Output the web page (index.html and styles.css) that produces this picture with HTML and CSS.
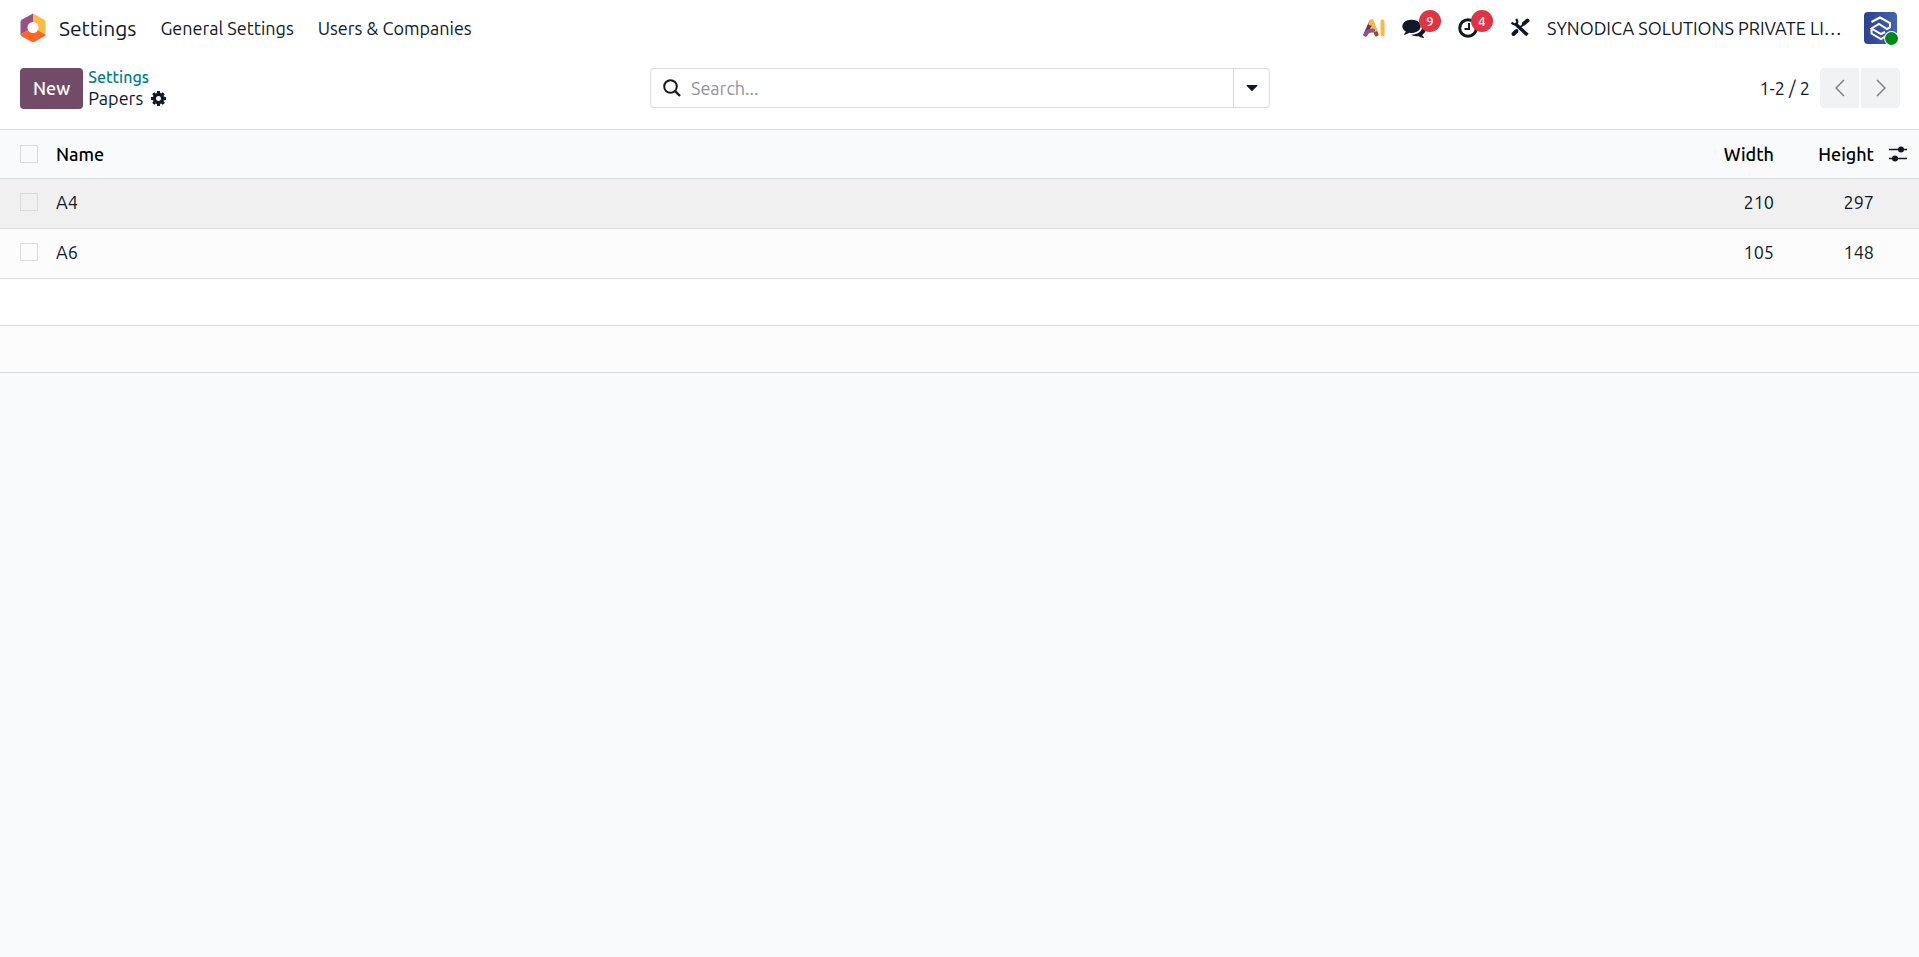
FILE: index.html
```html
<!DOCTYPE html>
<html lang="en">
  <head>
    <title>Papers</title>
    <meta charset="utf-8">
    <meta name="viewport" content="width=device-width, initial-scale=1">
    <link rel="stylesheet" href="styles.css">
  </head>
  <body>
    <header class="navbar">
      <nav class="menu">
        <a href="#" class="brand">
          <svg class="logo" viewBox="0 0 26 30" aria-hidden="true">
            <path d="M13 .5 2 6.500Q.5 7.500.5 9v12.500L13 14.500z" fill="#985184"/>
            <path d="M13 .5 24 6.500q1.500 1 1.500 2.500v12.500L13 14.500z" fill="#fbb945"/>
            <path d="M.5 21.500 13 14.500l12.500 7q0 1-1.500 2l-9.500 5.200q-1.500.8-3 0L2 23.500q-1.500-1-1.500-2z" fill="#fc6626"/>
            <circle cx="13" cy="14.500" r="5.500" fill="#fff"/>
          </svg>
          <span>Settings</span>
        </a>
        <a href="#" class="menu-item">General Settings</a>
        <a href="#" class="menu-item">Users &amp; Companies</a>
      </nav>
      <div class="systray">
        <button type="button" class="tray-btn" aria-label="AI">
          <svg class="icon-ai" viewBox="0 0 22 18" aria-hidden="true">
            <path d="M8.500 2.500 13.500 15.500" stroke="#a5432c" stroke-width="4" stroke-linecap="round"/>
            <path d="M8.500 2.500 12 11" stroke="#fbb945" stroke-width="4" stroke-linecap="round"/>
            <path d="M8 3 2.500 15.500" stroke="#6d2b5c" stroke-width="4" stroke-linecap="round"/>
            <path d="M8.500 2.500 7.500 4.500" stroke="#fbb945" stroke-width="4" stroke-linecap="round"/>
            <path d="M2.500 15.500q2-4.500 7.500-4" stroke="#985184" stroke-width="4" stroke-linecap="round" fill="none"/>
            <path d="M19.500 2.500v13" stroke="#fbb945" stroke-width="4" stroke-linecap="round"/>
          </svg>
        </button>
        <button type="button" class="tray-btn has-badge" aria-label="Messages">
          <svg class="icon-chat" viewBox="0 128 1792 1536" aria-hidden="true"><path fill="currentColor" d="M1408 768q0 139-94 257t-256.500 186.500-353.500 68.500q-86 0-176-16-124 88-278 128-36 9-86 16h-3q-11 0-20.500-8t-11.500-21q-1-3-1-6.500t.5-6.500 2-6l2.500-5 3.500-5.500 4-5 4.500-5 4-4.500q5-6 23-25t26-29.500 22.500-29 25-38.500 20.500-44q-124-72-195-177t-71-224q0-139 94-257t256.500-186.500 353.500-68.500 353.500 68.500 256.500 186.500 94 257zm384 256q0 120-71 224.500t-195 176.500q10 24 20.500 44t25 38.500 22.500 29 26 29.500 23 25q1 1 4 4.500t4.500 5 4 5 3.500 5.500l2.500 5 2 6 .5 6.500-1 6.500q-3 14-13 22t-22 7q-50-7-86-16-154-40-278-128-90 16-176 16-271 0-472-132 58 4 88 4 161 0 309-45t264-129q125-92 192-212t67-254q0-77-23-152 129 71 204 178t75 230z"/></svg>
          <span class="badge">9</span>
        </button>
        <button type="button" class="tray-btn has-badge" aria-label="Activities">
          <svg class="icon" viewBox="0 0 20 20" aria-hidden="true" fill="none" stroke="currentColor">
            <circle cx="10" cy="10" r="8.300" stroke-width="3"/>
            <path d="M11 5v6H6.500" stroke-width="2"/>
          </svg>
          <span class="badge">4</span>
        </button>
        <button type="button" class="tray-btn" aria-label="Developer tools">
          <svg class="icon" viewBox="0 0 20 20" aria-hidden="true" fill="none" stroke="currentColor">
            <path d="M5 5.500 17.500 17" stroke-width="3.500"/>
            <path d="M1.500 4.500q3 3 5 1t-.5-4.500" stroke-width="2.200"/>
            <path d="M10.500 9l4-3.500" stroke-width="1.800"/>
            <path d="M14 5.500l3.500-3" stroke-width="4" stroke-linecap="round"/>
            <path d="M6.500 13 3.500 16" stroke-width="4" stroke-linecap="round"/>
          </svg>
        </button>
        <button type="button" class="company">SYNODICA SOLUTIONS PRIVATE LI…</button>
        <button type="button" class="avatar" aria-label="User menu">
          <svg viewBox="0 0 33 32" aria-hidden="true">
            <defs>
              <linearGradient id="avatarBg" x1="0" x2="1" y1="0" y2="0">
                <stop offset="0" stop-color="#2b428f"/>
                <stop offset="1" stop-color="#4564ab"/>
              </linearGradient>
            </defs>
            <rect width="33" height="32" rx="4" fill="url(#avatarBg)"/>
            <path d="M7.500 10 16 5.500 26 11v4.500l-3 1.500-8-5-7.500 4.500 9.500 5.500 4-2M7.500 16v5.500l9.500 5.500 5-3" fill="none" stroke="#fff" stroke-width="2"/>
          </svg>
          <span class="status"></span>
        </button>
      </div>
    </header>

    <section class="control-panel">
      <div class="panel-left">
        <button type="button" class="btn-new">New</button>
        <div class="breadcrumb">
          <a href="#">Settings</a>
          <div class="current">
            <span>Papers</span>
            <button type="button" class="btn-cog" aria-label="Actions">
              <svg viewBox="128 128 1536 1536" aria-hidden="true"><path fill="currentColor" d="M1152 896q0-106-75-181t-181-75-181 75-75 181 75 181 181 75 181-75 75-181zm512-109v222q0 12-8 23t-20 13l-185 28q-19 54-39 91 35 50 107 138 10 12 10 25t-9 23q-27 37-99 108t-94 71q-12 0-26-9l-138-108q-44 23-91 38-16 136-29 186-7 28-36 28h-222q-14 0-24.500-8.500t-11.500-21.500l-28-184q-49-16-90-37l-141 107q-10 9-25 9-14 0-25-11-126-114-165-168-7-10-7-23 0-12 8-23 15-21 51-66.500t54-70.500q-27-50-41-99l-183-27q-13-2-21-12.500t-8-23.500v-222q0-12 8-23t19-13l186-28q14-46 39-92-40-57-107-138-10-12-10-24 0-10 9-23 26-36 98.500-107.500t94.500-71.500q13 0 26 10l138 107q44-23 91-38 16-136 29-186 7-28 36-28h222q14 0 24.500 8.500t11.500 21.500l28 184q49 16 90 37l142-107q9-9 24-9 13 0 25 10 129 119 165 170 7 8 7 22 0 12-8 23-15 21-51 66.500t-54 70.500q26 50 41 98l183 28q13 2 21 12.500t8 23.500z"/></svg>
            </button>
          </div>
        </div>
      </div>
      <form class="search" role="search">
        <label for="search" class="search-label" aria-label="Search">
          <svg viewBox="0 0 18 18" aria-hidden="true" fill="none" stroke="currentColor">
            <circle cx="7.500" cy="7.500" r="6.300" stroke-width="2"/>
            <path d="M12 12l5 5" stroke-width="2.400"/>
          </svg>
        </label>
        <input type="text" id="search" placeholder="Search...">
        <button type="button" class="search-toggle" aria-label="Toggle search panel">
          <svg viewBox="0 0 12 6" aria-hidden="true"><path d="M1 0h10q.8.2.3 1L6.600 5.700q-.6.5-1.200 0L.7 1Q.2.200 1 0z" fill="currentColor"/></svg>
        </button>
      </form>
      <div class="pager">
        <span class="pager-text">1-2 / 2</span>
        <button type="button" class="prev" aria-label="Previous" disabled>
          <svg viewBox="0 0 10 18" aria-hidden="true"><path d="M9 1 1 9l8 8" fill="none" stroke="currentColor" stroke-width="1.500"/></svg>
        </button>
        <button type="button" class="next" aria-label="Next" disabled>
          <svg viewBox="0 0 10 18" aria-hidden="true"><path d="M1 1l8 8-8 8" fill="none" stroke="currentColor" stroke-width="1.500"/></svg>
        </button>
      </div>
    </section>

    <main>
      <table class="list">
        <thead>
          <tr>
            <th class="col-check"><input type="checkbox" aria-label="Select all"></th>
            <th class="col-name">Name</th>
            <th class="col-width">Width</th>
            <th class="col-height">Height</th>
            <th class="col-options">
              <button type="button" class="btn-options" aria-label="Optional columns">
                <svg viewBox="0 0 18 16" aria-hidden="true">
                  <path d="M0 3.500h18M0 12.500h18" stroke="currentColor" stroke-width="1.300"/>
                  <circle cx="12" cy="3.500" r="3" fill="currentColor"/>
                  <circle cx="6" cy="12.500" r="3" fill="currentColor"/>
                </svg>
              </button>
            </th>
          </tr>
        </thead>
        <tbody>
          <tr class="hovered">
            <td class="col-check"><input type="checkbox" aria-label="Select A4"></td>
            <td>A4</td>
            <td class="number">210</td>
            <td class="number">297</td>
            <td></td>
          </tr>
          <tr>
            <td class="col-check"><input type="checkbox" aria-label="Select A6"></td>
            <td>A6</td>
            <td class="number">105</td>
            <td class="number">148</td>
            <td></td>
          </tr>
          <tr class="empty"><td colspan="5"></td></tr>
          <tr class="empty"><td colspan="5"></td></tr>
        </tbody>
      </table>
    </main>
  </body>
</html>
```
FILE: styles.css
```css
* {
  box-sizing: border-box;
}

body {
  margin: 0;
  background: #f9fafb;
  color: #111827;
  font: 18px/21px Ubuntu, "Noto Sans", sans-serif;
}

a {
  color: inherit;
  text-decoration: none;
}

button {
  padding: 0;
  border: 0;
  background: none;
  color: inherit;
  font: inherit;
  cursor: pointer;
}

svg {
  display: block;
}

/* Top bar */
.navbar {
  display: flex;
  align-items: center;
  justify-content: space-between;
  height: 56px;
  padding: 0 22px 0 20px;
  background: #fff;
}

.menu {
  display: flex;
  align-items: center;
  gap: 24px;
}

.brand {
  display: flex;
  align-items: center;
  gap: 13px;
  font-size: 21px;
}

.logo {
  width: 26px;
  height: 30px;
}

.systray {
  display: flex;
  align-items: center;
  gap: 17px;
}

.tray-btn {
  position: relative;
}

.has-badge {
  padding-right: 15px;
}

.icon {
  width: 20px;
  height: 20px;
}

.icon-ai {
  width: 22px;
  height: 18px;
}

.icon-chat {
  width: 24px;
  height: 20px;
}

.badge {
  position: absolute;
  top: -8px;
  right: 0;
  width: 22px;
  height: 22px;
  border-radius: 50%;
  background: #dc3545;
  color: #fff;
  font-size: 13px;
  font-weight: 500;
  line-height: 22px;
  text-align: center;
}

.company {
  width: 300px;
  text-align: left;
  white-space: nowrap;
}

.avatar {
  position: relative;
  width: 33px;
  height: 32px;
}

.status {
  position: absolute;
  right: -1px;
  bottom: -1px;
  width: 13px;
  height: 13px;
  border-radius: 50%;
  background: #008818;
  box-shadow: 0 0 0 1px #fff;
}

/* Control panel */
.control-panel {
  display: grid;
  grid-template-columns: 1fr minmax(300px, 620px) 1fr;
  align-items: center;
  padding: 11px 19px 20px 20px;
  border-bottom: 1px solid #d8dadd;
  background: #fff;
}

.panel-left {
  display: flex;
  align-items: center;
  gap: 5px;
}

.btn-new {
  height: 41px;
  padding: 0 13px;
  border-radius: 4px;
  background: #714b67;
  color: #fff;
  font-weight: 500;
}

.breadcrumb a {
  display: block;
  color: #017e84;
  font-size: 16px;
  font-weight: 500;
}

.current {
  display: flex;
  align-items: center;
  gap: 8px;
}

.btn-cog svg {
  width: 15px;
  height: 15px;
}

.search {
  display: flex;
  height: 40px;
  border: 1px solid #d8dadd;
  border-radius: 4px;
}

.search-label {
  display: flex;
  align-items: center;
  padding: 0 10px 0 12px;
}

.search-label svg {
  width: 18px;
  height: 18px;
}

.search input {
  flex: 1;
  min-width: 0;
  padding: 0;
  border: 0;
  outline: 0;
  background: none;
  color: inherit;
  font: inherit;
}

.search input::placeholder {
  color: #8f949d;
  opacity: 1;
}

.search-toggle {
  display: flex;
  align-items: center;
  justify-content: center;
  width: 36px;
  border-left: 1px solid #d8dadd;
}

.search-toggle svg {
  width: 12px;
  height: 6px;
}

.pager {
  display: flex;
  align-items: center;
  justify-content: flex-end;
  gap: 2px;
}

.pager-text {
  margin-right: 8px;
}

.pager button {
  display: flex;
  align-items: center;
  justify-content: center;
  width: 39px;
  height: 40px;
  background: #f1f2f4;
  color: #7c7f85;
}

.pager svg {
  width: 10px;
  height: 18px;
}

.prev {
  border-radius: 4px 0 0 4px;
}

.next {
  border-radius: 0 4px 4px 0;
}

/* List view */
.list {
  width: 100%;
  border-collapse: separate;
  border-spacing: 0;
  table-layout: fixed;
}

.list th,
.list td {
  height: 50px;
  padding: 0 9px 3px;
  border-bottom: 1px solid #d8dadd;
  text-align: left;
}

.list th {
  height: 49px;
  padding-bottom: 0;
  background: #f9fafb;
  color: #000;
  font-weight: 500;
}

.list .col-check {
  width: 47px;
  padding-left: 20px;
}

.list .col-width,
.list .col-height,
.list .number {
  text-align: right;
}

.col-width,
.col-height {
  width: 100px;
}

.list .col-options {
  width: 36px;
  padding-left: 6px;
}

.list tbody tr {
  background: #fff;
}

.list tbody tr:nth-child(even) {
  background: #fcfcfc;
}

.list tbody .hovered {
  background: #f0f0f0;
}

.list .empty td {
  height: 47px;
}

.list input {
  display: block;
  width: 18px;
  height: 18px;
  margin: 0;
  border: 1px solid #d8dadd;
  appearance: none;
}

.btn-options {
  display: block;
  color: #111827;
}

.btn-options svg {
  width: 18px;
  height: 16px;
}
```
